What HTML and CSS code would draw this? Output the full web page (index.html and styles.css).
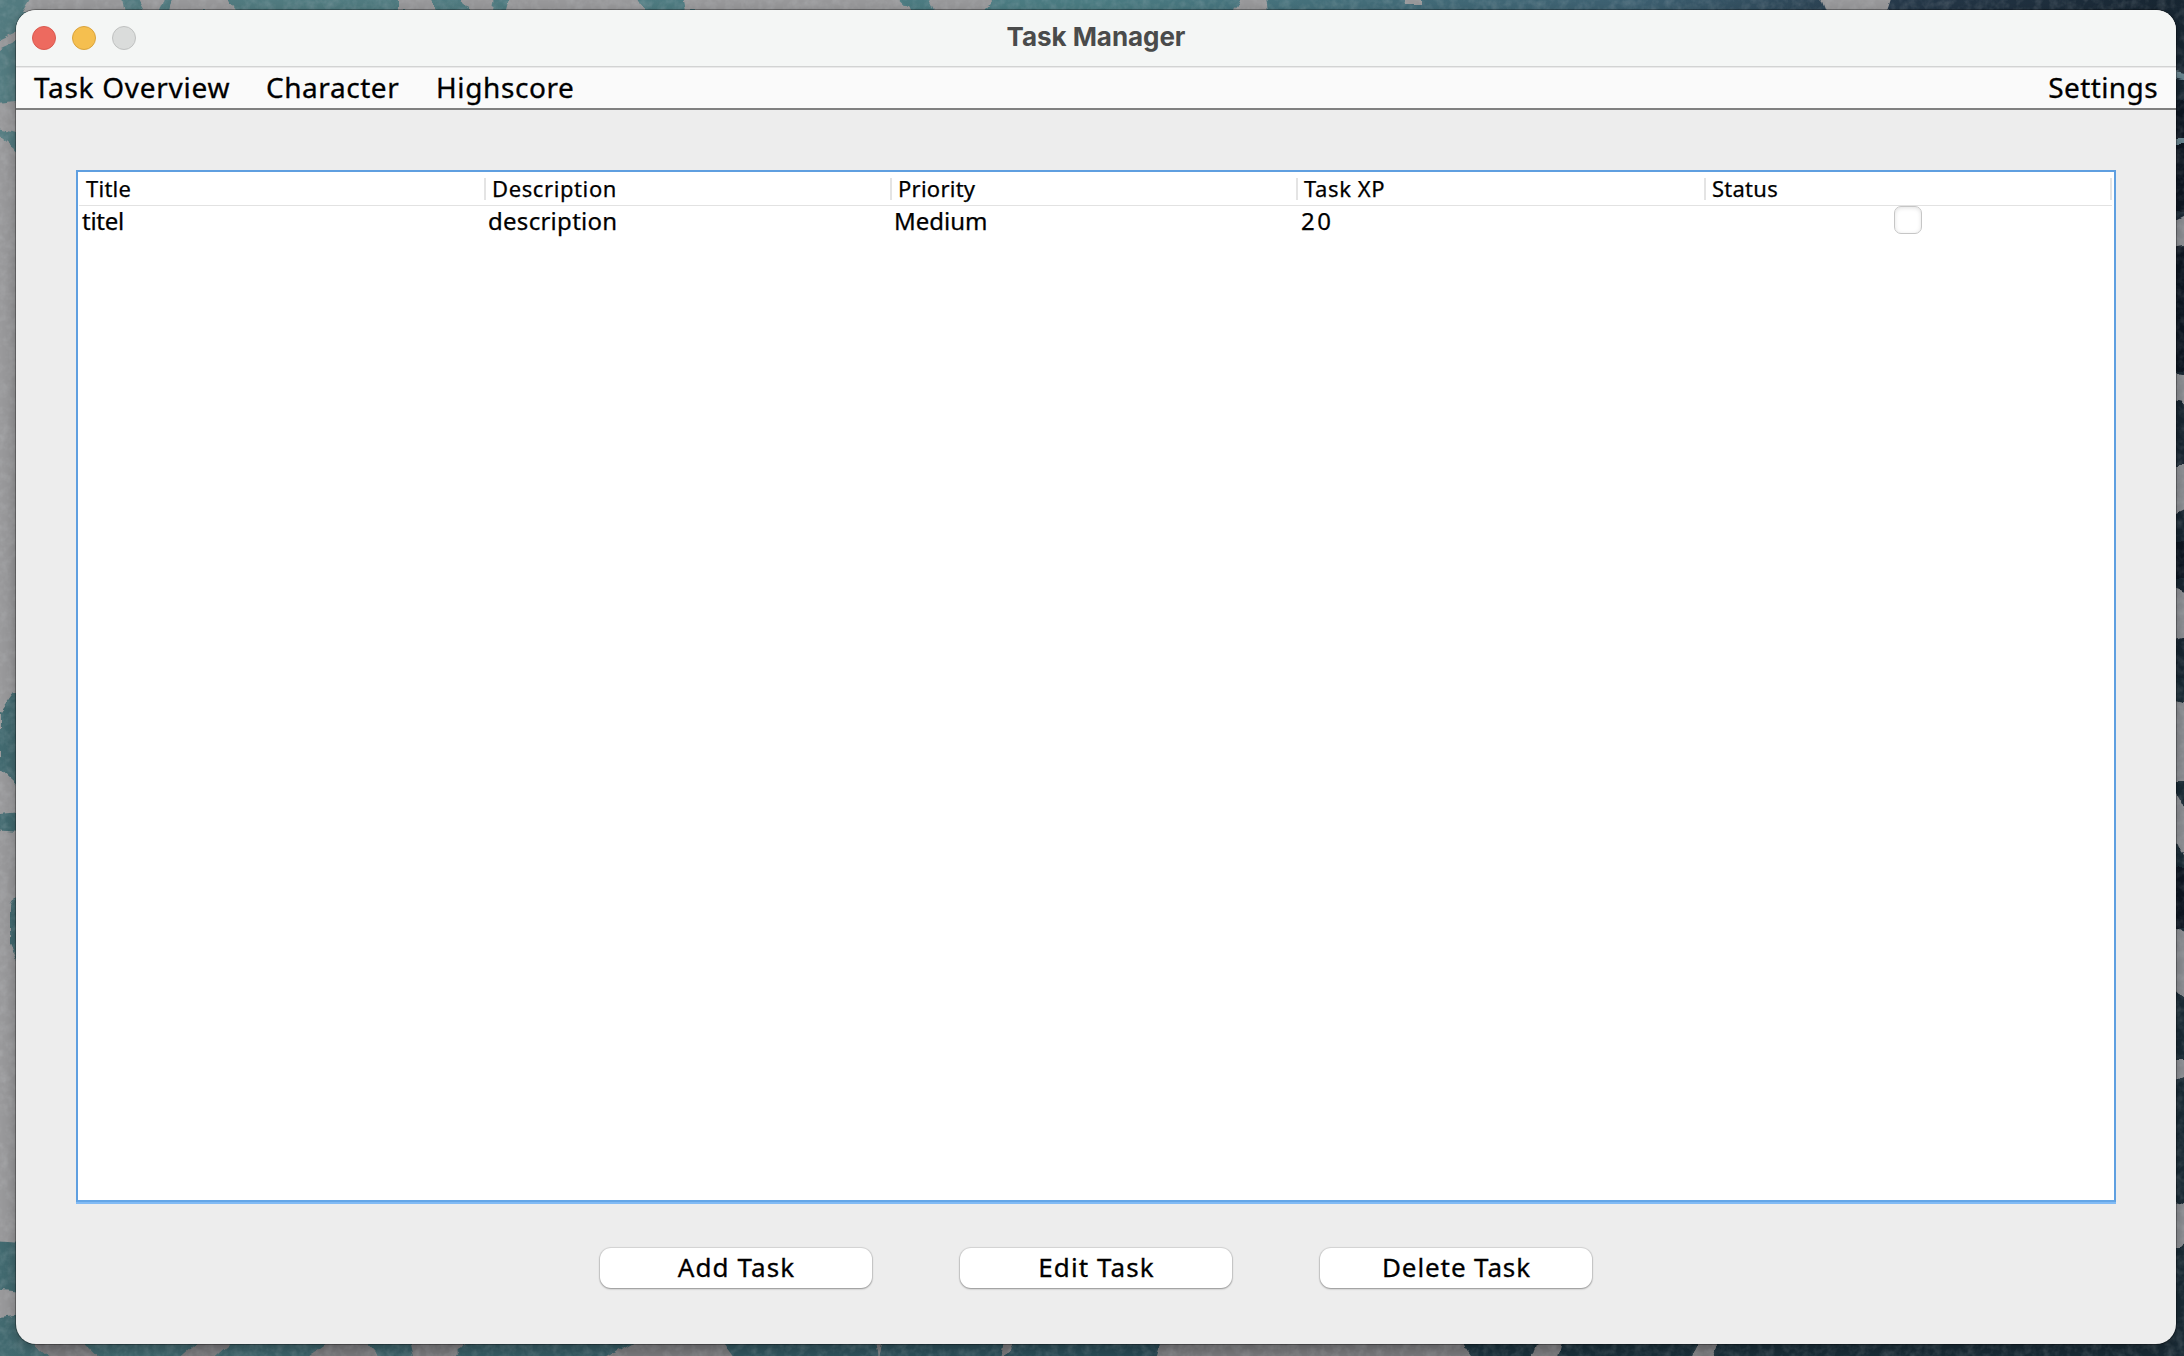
FILE: index.html
```html
<!DOCTYPE html>
<html lang="en">
<head>
<meta charset="utf-8">
<title>Task Manager</title>
<link rel="stylesheet" href="styles.css">
</head>
<body>
<svg class="wallpaper" viewBox="0 0 2184 1356" aria-hidden="true">
  <defs>
    <linearGradient id="sea" x1="0" x2="1"><stop offset="0" stop-color="#537b80"/><stop offset=".5" stop-color="#4b7c83"/><stop offset=".75" stop-color="#3d6071"/><stop offset=".87" stop-color="#26394a"/><stop offset="1" stop-color="#172531"/></linearGradient>
    <linearGradient id="deep" x1="0" x2="1"><stop offset="0" stop-color="#426a70"/><stop offset=".5" stop-color="#294b56"/><stop offset=".7" stop-color="#1a303b"/><stop offset="1" stop-color="#192a35"/></linearGradient>
    <filter id="foam" x="0" y="0" width="100%" height="100%"><feTurbulence type="fractalNoise" baseFrequency=".12" numOctaves="3" seed="4"/><feColorMatrix values="0 0 0 0 .75  0 0 0 0 .78  0 0 0 0 .8  .9 0 0 0 -.35"/></filter>
    <filter id="ragged" x="0" y="0" width="100%" height="100%"><feTurbulence type="fractalNoise" baseFrequency=".07" numOctaves="3" seed="9"/><feDisplacementMap in="SourceGraphic" scale="9" xChannelSelector="R" yChannelSelector="G"/></filter>
  </defs>
  <path fill="url(#sea)" d="M0 0H2184V678H0z"/>
  <path fill="url(#deep)" d="M0 678H2184V1356H0z"/>
  <g filter="url(#ragged)">
    <path fill="#99999b" d="M-9 45 22 30V38L-9 52zM-9 104 22 100V133L-9 127zM-9 131 22 156V682L0 712V770L22 790V812L-9 815V830L22 832V885L10 905V945L22 975V1243L-9 1241zM-9 1290 22 1293V1314L-9 1318z"/>
    <path fill="#99999b" d="M22 12 35 -9H122L126 12zM134 -9H165L158 12H145zM170 12 175 -9H222L235 12zM398 12V-9H425L440 12zM458 -9 470 12H492L495 -9zM512 -9 506 12H645L633 -9zM686 12 682 -9H890L912 12zM925 -9 935 12H985L1000 -9zM1235 12 1245 -9H1265L1268 12zM1403 -9H1420V4H1405zM1818 -9H1895L1888 12H1826z"/>
    <path fill="#79797b" d="M30 1340H82L105 1362H55zM200 1340H235L210 1362H175zM330 1340H365L385 1362H300zM410 1340H470L450 1362H415zM600 1362 640 1340H722L738 1362zM875 1340H882L878 1362zM1005 1340H1015L1000 1362zM1162 1340H1460L1475 1362H1155zM1538 1340H1560L1555 1362H1530zM1690 1362 1700 1340H1720L1710 1362z"/>
    <path fill="#0f1922" d="M2170 100h20v112h-20zM2170 248h20v122h-20zM2170 542h20v38h-20zM2170 868h20v60h-20z"/>
    <path fill="#8c8e93" d="M2170 222 2190 212V246L2170 250zM2170 372 2190 375V405L2170 400zM2170 465H2190V505L2170 515zM2170 585 2190 592V635L2170 640zM2170 700 2190 705V780H2170zM2170 785 2190 820V870L2170 825zM2170 925 2190 935V1000L2170 990zM2170 1060H2190V1075L2170 1085zM2170 1200 2190 1205V1242L2170 1248z"/>
    <path fill="#688590" d="M2170 70 2190 74V80L2170 77zM2170 138H2190V142H2170z"/>
  </g>
  <rect width="2184" height="1356" filter="url(#foam)" opacity=".35"/>
</svg>
<main class="window">
  <header class="titlebar">
    <div class="lights"><i class="light close"></i><i class="light minimize"></i><i class="light zoom"></i></div>
    <h1 class="title">Task Manager</h1>
  </header>
  <nav class="menubar">
    <span class="menu overview">Task Overview</span>
    <span class="menu character">Character</span>
    <span class="menu highscore">Highscore</span>
    <span class="menu settings">Settings</span>
  </nav>
  <section class="content">
    <div class="table">
      <div class="row head">
        <span class="th">Title</span><span class="th wide">Description</span><span class="th">Priority</span><span class="th wide">Task XP</span><span class="th">Status</span>
      </div>
      <div class="row">
        <span class="td tight">titel</span><span class="td loose">description</span><span class="td">Medium</span><span class="td number">20</span><span class="td status"><i class="checkbox"></i></span>
      </div>
    </div>
    <div class="actions">
      <button class="button">Add Task</button>
      <button class="button">Edit Task</button>
      <button class="button delete">Delete Task</button>
    </div>
  </section>
</main>
</body>
</html>
```
FILE: styles.css
```css
* { box-sizing: border-box; }
body {
  margin: 0;
  height: 1356px;
  padding: 10px 8px 12px 16px;
  overflow: hidden;
  font-family: "Noto Sans", sans-serif;
  color: #000;
}
.wallpaper {
  position: absolute;
  inset: 0;
  width: 2184px;
  height: 1356px;
  z-index: -1;
}
.window {
  height: 1334px;
  display: flex;
  flex-direction: column;
  border-radius: 20px;
  overflow: hidden;
  background: #ededed;
  box-shadow: 0 0 0 1px rgba(0, 0, 0, .3), 0 4px 14px rgba(0, 0, 0, .3);
}
.titlebar {
  height: 58px;
  display: grid;
  grid-template-columns: 1fr auto 1fr;
  align-items: center;
  padding: 0 16px 1px;
  background: #f4f6f5;
  border-bottom: 1px solid #e9e9e9;
  box-shadow: inset 0 -1px #d2d3d3;
}
.lights { display: flex; gap: 16px; }
.light { width: 24px; height: 24px; border-radius: 50%; border: 1px solid; }
.close { background: #ed6a5f; border-color: #d95a50; }
.minimize { background: #f5bf4f; border-color: #d9a33d; }
.zoom { background: #dadcdb; border-color: #bfc1c0; }
.title {
  margin: 0;
  padding-bottom: 2px;
  font: 700 26px/32px Inter, sans-serif;
  letter-spacing: -.05px;
  color: #4a4b4b;
}
.menubar {
  height: 42px;
  display: flex;
  padding: 0 18px;
  background: #fafafa;
  border-bottom: 2px solid #808080;
  font-size: 28px;
  line-height: 38px;
  letter-spacing: .6px;
  -webkit-text-stroke: .3px #000;
}
.overview { width: 232px; letter-spacing: .72px; }
.character { width: 170px; letter-spacing: .55px; }
.settings { margin-left: auto; letter-spacing: .4px; }
.content { flex: 1; padding: 60px 60px 0; }
.table {
  height: 1032px;
  padding-left: 1px;
  background: #fff;
  border: 2px solid #5f9fe0;
  border-bottom-color: #65a6e7;
  box-shadow: 0 2px #82bbf5;
}
.row {
  display: grid;
  grid-template-columns: 407px 406px 406px 408px 1fr;
  height: 32px;
  font-size: 24px;
  line-height: 30px;
  -webkit-text-stroke: .25px #000;
}
.head {
  height: 34px;
  margin-right: 2px;
  padding-top: 6px;
  border-bottom: 1px solid #e2e2e2;
  font-size: 22px;
}
.th {
  height: 22px;
  padding-left: 6px;
  border-right: 2px solid #e4e4e4;
  line-height: 20px;
  letter-spacing: .25px;
}
.th:first-child { padding-left: 7px; }
.wide { letter-spacing: .6px; }
.td { padding-left: 2px; }
.loose { letter-spacing: .28px; }
.tight { padding-left: 3px; letter-spacing: -.27px; }
.number { padding-left: 3px; letter-spacing: 2.4px; }
.status { display: flex; justify-content: center; padding: 0 4px 0 0; }
.checkbox {
  width: 28px;
  height: 28px;
  border: 1px solid #c6c6c6;
  border-radius: 7px;
  background: #fff;
  box-shadow: inset 0 1px 4px rgba(0, 0, 0, .12);
}
.actions {
  display: flex;
  justify-content: center;
  gap: 88px;
  padding-top: 46px;
}
.button {
  width: 272px;
  height: 40px;
  padding: 0 0 2px 1px;
  border: 0;
  border-radius: 11px;
  background: #fff;
  box-shadow: 0 0 1px 1px rgba(0, 0, 0, .1), 0 1px 2px rgba(0, 0, 0, .32);
  color: #000;
  font: 26px/38px "Noto Sans", sans-serif;
  letter-spacing: 1.1px;
  -webkit-text-stroke: .3px #000;
}
.delete { letter-spacing: .9px; }
```
